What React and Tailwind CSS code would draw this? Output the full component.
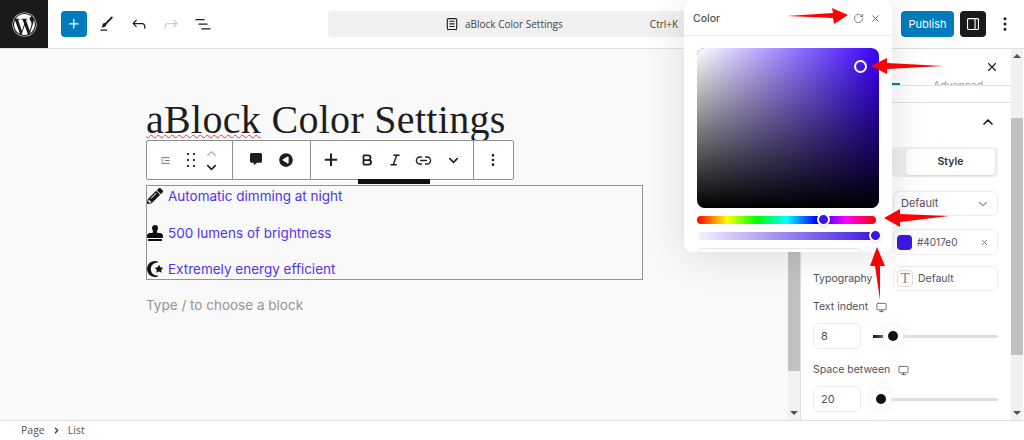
import {Bold, ChevronDown, ChevronRight, ChevronUp, Italic, Link2, MoreVertical, Monitor, RotateCw, X} from "lucide-react";
import {FaCommentAlt, FaPencilAlt, FaPlayCircle, FaStamp, FaStarAndCrescent, FaWordpress} from "react-icons/fa";

const items = [
    {icon: FaPencilAlt, text: "Automatic dimming at night"},
    {icon: FaStamp, text: "500 lumens of brightness"},
    {icon: FaStarAndCrescent, text: "Extremely energy efficient"},
];

function WpIcon({d, className = "text-[#1e1e1e]"}) {
    return (
        <svg viewBox="0 0 24 24" className={`w-5 h-5 fill-current ${className}`}>
            <path d={d}/>
        </svg>
    );
}

function Header() {
    return (
        <header className="h-[49px] shrink-0 flex items-center bg-white border-b border-[#e0e0e0]">
            <div className="w-12 h-12 bg-[#1a1a1a] flex items-center justify-center shrink-0">
                <FaWordpress className="text-white text-[25px]"/>
            </div>
            <div className="ml-[13px] w-[26px] h-[26px] bg-[#007cba] rounded-sm flex items-center justify-center">
                <svg viewBox="0 0 24 24" className="w-5 h-5 fill-white">
                    <path d="M11 12.5V17.5H12.5V12.5H17.5V11H12.5V6H11V11H6V12.5H11Z"/>
                </svg>
            </div>
            <div className="ml-[10px] flex gap-3">
                <WpIcon d="M4 20h8v-1.5H4V20zM18.9 3.5c-.6-.6-1.5-.6-2.1 0l-7.2 7.2c-.4-.1-.7 0-1.1.1-.5.2-1.5.7-1.9 2.2-.3 1-.6 1.9-.7 2.5l-.4.9.9-.2 2.5-.7c1.4-.4 2-1.4 2.2-1.9.1-.4.2-.7.1-1.1l7.2-7.2c.6-.6.6-1.5 0-2.1z"/>
                <WpIcon d="M18.3 11.7c-.6-.6-1.4-.9-2.3-.9H6.7l2.9-3.3-1.1-1-4.5 5L8.5 16l1-1-2.7-2.7H16c.5 0 .9.2 1.3.5 1 1 1 3.4 1 4.5v.3h1.5v-.2c0-1.5 0-4.3-1.5-5.7z"/>
                <WpIcon className="text-[#cccccc]" d="M15.6 6.5l-1.1 1 2.9 3.3H8c-.9 0-1.7.3-2.3.9-1.4 1.5-1.4 4.2-1.4 5.6v.2h1.5v-.3c0-1.1 0-3.5 1-4.5.3-.3.7-.5 1.3-.5h9.2L14.5 15l1.1 1.1 4.6-4.6-4.6-5z"/>
                <WpIcon d="M3 6h11v1.5H3V6zm3.5 5.5h11V13h-11v-1.5zM21 17H10v1.5h11V17z"/>
            </div>
            <div className="ml-[115px] w-[362px] h-[26px] rounded bg-[#f0f0f0] flex items-center font-['Open_Sans',sans-serif] text-[10px] text-[#444444]">
                <svg viewBox="0 0 24 24" className="ml-[115px] w-[18px] h-[18px] fill-[#1e1e1e]">
                    <path d="M15.5 7.5h-7V9h7V7.5Zm-7 3.5h7v1.5h-7V11Zm7 3.5h-7V16h7v-1.5Z"/>
                    <path fillRule="evenodd" d="M17 4H7a2 2 0 0 0-2 2v12a2 2 0 0 0 2 2h10a2 2 0 0 0 2-2V6a2 2 0 0 0-2-2ZM7 5.5h10a.5.5 0 0 1 .5.5v12a.5.5 0 0 1-.5.5H7a.5.5 0 0 1-.5-.5V6a.5.5 0 0 1 .5-.5Z"/>
                </svg>
                <span className="ml-[4px]">aBlock Color Settings</span>
                <span className="ml-[87px]">Ctrl+K</span>
            </div>
            <button className="ml-[211px] w-[53px] h-[26px] rounded-sm bg-[#007cba] text-white text-[11px] font-['Inter',sans-serif]">Publish</button>
            <div className="ml-[6px] w-[26px] h-[26px] rounded-sm bg-[#1a1a1a] flex items-center justify-center">
                <svg viewBox="0 0 24 24" className="w-[18px] h-[18px] fill-white">
                    <path d="M18 4H6c-1.1 0-2 .9-2 2v12c0 1.1.9 2 2 2h12c1.1 0 2-.9 2-2V6c0-1.1-.9-2-2-2zM5.5 18V6c0-.3.2-.5.5-.5h8v13H6c-.3 0-.5-.2-.5-.5zm13 0c0 .3-.2.5-.5.5h-2.500v-13H18c.3 0 .5.2.5.5v12z"/>
                </svg>
            </div>
            <MoreVertical className="ml-[10px] w-[18px] h-[18px] text-[#1e1e1e]" strokeWidth={2}/>
        </header>
    );
}

function BlockToolbar() {
    return (
        <div className="relative w-[368px] h-[40px] mt-[-1px] bg-white border border-[#8f8f8f] rounded-[2px] flex items-center text-[#1e1e1e]">
            <div className="w-[86px] h-full flex items-center border-r border-[#8f8f8f]">
                <svg viewBox="0 0 16 16" className="ml-[12px] w-[13px] h-[13px] stroke-[#555555]" fill="none">
                    <path d="M3 4.5h10M7.500 8H13M3 11.500h10M3 6.500 5 8l-2 1.500"/>
                </svg>
                <div className="ml-[15px] grid grid-cols-2 gap-x-[4px] gap-y-[4px]">
                    {[0, 1, 2, 3, 4, 5].map((n) => <span key={n} className="w-[2px] h-[2px] bg-[#333333]"/>)}
                </div>
                <div className="ml-[9px] flex flex-col items-center">
                    <ChevronUp className="w-[15px] h-[15px] text-[#aaaaaa] -mb-[1px]"/>
                    <ChevronDown className="w-[15px] h-[15px] text-[#1e1e1e]" strokeWidth={2.500}/>
                </div>
            </div>
            <div className="w-[78px] h-full flex items-center border-r border-[#8f8f8f]">
                <FaCommentAlt className="ml-[17px] text-[12px] -mt-[2px]"/>
                <FaPlayCircle className="ml-[17px] text-[14px] rotate-180"/>
            </div>
            <div className="w-[163px] h-full flex items-center border-r border-[#8f8f8f]">
                <svg viewBox="0 0 24 24" className="ml-[8px] w-[24px] h-[24px] fill-[#1e1e1e]">
                    <path d="M11 12.800V18h2v-5.200h5.200v-2H13V5.500h-2v5.300H5.800v2H11Z"/>
                </svg>
                <Bold className="ml-[17px] w-[14px] h-[14px]" strokeWidth={3}/>
                <Italic className="ml-[14px] w-[14px] h-[14px]" strokeWidth={2.500}/>
                <Link2 className="ml-[13px] w-[17px] h-[17px]" strokeWidth={2}/>
                <ChevronDown className="ml-[14px] w-[15px] h-[15px]" strokeWidth={2.500}/>
            </div>
            <MoreVertical className="ml-[11px] w-[16px] h-[16px]" strokeWidth={2}/>
            <div className="absolute left-[211px] -bottom-[5px] w-[72px] h-[5px] bg-[#111111]"/>
        </div>
    );
}

function Scrollbar({thumbTop, thumbHeight}) {
    return (
        <div className="w-3 shrink-0 bg-[#f1f1f1] flex flex-col items-center justify-between py-[5px] relative">
            <span className="w-0 h-0 border-x-[4px] border-x-transparent border-b-[4px] border-b-[#505050]"/>
            <span className="w-0 h-0 border-x-[4px] border-x-transparent border-t-[4px] border-t-[#505050]"/>
            <div className="absolute left-0 w-full bg-[#c1c1c1]" style={{top: thumbTop, height: thumbHeight}}/>
        </div>
    );
}

function Canvas() {
    return (
        <main className="w-[788px] shrink-0 bg-[#f9f9f9] pl-[146px] pt-[48px] flex flex-col font-['Inter',sans-serif]">
            <h1 className="font-['Liberation_Serif',serif] text-[40px] leading-[45px] tracking-[0.3px] text-[#1e1e1e] whitespace-nowrap h-[44px]">
                <span className="underline decoration-wavy decoration-[#e53e3e] decoration-1">aBlock</span> Color Settings
            </h1>
            <BlockToolbar/>
            <ul className="mt-[5px] w-[497px] h-[95px] border border-[#949494] bg-[#f9f9f9]">
                {items.map(({icon: Icon, text}) => (
                    <li key={text} className="h-[36.500px] flex items-start">
                        <Icon className="mt-[2px] w-[16px] h-[16px] text-[#111111]"/>
                        <span className="ml-[5px] text-[13.500px] leading-[20px] text-[#4f35ea]">{text}</span>
                    </li>
                ))}
            </ul>
            <p className="mt-[15px] text-[13.500px] leading-[20px] text-[#949494]">Type / to choose a block</p>
        </main>
    );
}

function Field({className = "", children}) {
    return (
        <div className={`border border-[#eeeeee] rounded-md bg-white flex items-center ${className}`}>{children}</div>
    );
}

function Slider({value, offset}) {
    return (
        <div className="relative flex-1 h-[3px] bg-[#dddddd] rounded-full ml-[12px]">
            <div className="absolute left-0 top-0 h-[3px] bg-[#111111]" style={{width: value}}/>
            <div className="absolute top-[-4px] w-[10px] h-[10px] rounded-full bg-[#111111] shadow-[0_0_0_5px_#ffffff,0_0_14px_6px_#eeeeee]" style={{left: offset}}/>
        </div>
    );
}

function Sidebar() {
    return (
        <aside className="w-[211px] shrink-0 bg-white border-l border-[#e0e0e0] font-['Inter',sans-serif] text-[10.500px] text-[#50505a] flex flex-col">
            <div className="h-[37px] shrink-0 flex border-b border-[#e0e0e0] overflow-hidden">
                <span className="self-end ml-[91px] w-[8px] h-[2px] bg-[#007cba] shrink-0"/>
                <span className="self-end ml-[33px] -mb-[8px] text-[#999999] text-[10.500px] leading-[14px] shrink-0">Advanced</span>
                <X className="self-center ml-auto mr-[12px] w-[14px] h-[14px] text-[#1e1e1e] shrink-0" strokeWidth={2}/>
            </div>
            <div className="h-[17px] shrink-0 border-b border-[#e0e0e0]"/>
            <div className="h-[37px] shrink-0 flex items-center justify-end pr-[15px]">
                <ChevronUp className="w-[16px] h-[16px] text-[#1e1e1e]" strokeWidth={2.500}/>
            </div>
            <div className="mt-[7px] ml-[91px] mr-[13px] h-[30px] shrink-0 rounded bg-[#f1f1f1] py-[2px] pr-[3px] flex justify-end">
                <div className="w-[89px] rounded bg-white shadow-sm flex items-center justify-center font-semibold text-[#333333]">Style</div>
            </div>
            <div className="pl-[12px] pr-[13px]">
                <div className="mt-[14px] flex justify-end">
                    <Field className="w-[105px] h-[25px] px-[7px] justify-between text-[11px]">
                        Default
                        <ChevronDown className="w-[14px] h-[14px] text-[#999999]"/>
                    </Field>
                </div>
                <div className="mt-[13px] flex justify-end">
                    <Field className="w-[105px] h-[26px] pl-[3px] pr-[8px] justify-between">
                        <span className="flex items-center">
                            <span className="w-[15px] h-[15px] rounded-sm bg-[#4017e0]"/>
                            <span className="ml-[5px] text-[10px]">#4017e0</span>
                        </span>
                        <X className="w-[9px] h-[9px] text-[#666666]"/>
                    </Field>
                </div>
                <div className="mt-[11px] flex items-center justify-between">
                    <span>Typography</span>
                    <Field className="w-[105px] h-[25px] pl-[3px]">
                        <span className="w-[16px] h-[17px] border border-[#dddddd] rounded-sm flex items-center justify-center font-['Liberation_Serif',serif] text-[15px] text-[#888888]">T</span>
                        <span className="ml-[5px]">Default</span>
                    </Field>
                </div>
                <div className="mt-[9px] h-[14px] flex items-center">
                    Text indent
                    <Monitor className="ml-[8px] w-[11px] h-[11px] text-[#666666]"/>
                </div>
                <div className="mt-[9px] flex items-center">
                    <Field className="w-[48px] h-[26px] pl-[7px] text-[11px]">8</Field>
                    <Slider value={12} offset={15}/>
                </div>
                <div className="mt-[14px] h-[14px] flex items-center">
                    Space between
                    <Monitor className="ml-[8px] w-[11px] h-[11px] text-[#666666]"/>
                </div>
                <div className="mt-[9px] flex items-center">
                    <Field className="w-[48px] h-[26px] pl-[7px] text-[11px]">20</Field>
                    <Slider value={0} offset={3}/>
                </div>
            </div>
        </aside>
    );
}

function ColorPopover() {
    return (
        <div className="absolute left-[684px] top-0 w-[208px] h-[252px] bg-white rounded-lg shadow-[0_4px_40px_rgba(0,0,0,0.12)] overflow-hidden font-['Inter',sans-serif]">
            <div className="h-[36px] pt-[2px] border-b border-[#e8e8e8] flex items-center pl-[9px] pr-[11px] text-[10.500px] text-[#555555] font-medium">
                <span className="flex-1">Color</span>
                <RotateCw className="w-[11px] h-[11px] text-[#777777]"/>
                <X className="ml-[6px] w-[11px] h-[11px] text-[#555555]"/>
            </div>
            <div className="px-[13px] pt-[12px]">
                <div className="relative w-[182px] h-[160px] rounded-lg bg-[#3a00ff]">
                    <div className="absolute inset-0 rounded-lg bg-[linear-gradient(to_right,#ffffff,rgba(255,255,255,0))]"/>
                    <div className="absolute inset-0 rounded-lg bg-[linear-gradient(to_bottom,rgba(0,0,0,0),#000000)]"/>
                    <div className="absolute left-[157px] top-[12px] w-[13px] h-[13px] rounded-full border-2 border-white"/>
                </div>
                <div className="relative mt-[8px] w-[179px] h-[8px] rounded-full bg-[linear-gradient(to_right,#ff0000,#ffff00,#00ff00,#00ffff,#0000ff,#ff00ff,#ff0000)]">
                    <div className="absolute left-[120px] top-[-3px] w-[13px] h-[13px] rounded-full bg-[#3a14e0] border-2 border-white shadow"/>
                </div>
                <div className="relative mt-[8px] w-[179px] h-[8px] rounded-full bg-[linear-gradient(to_right,rgba(64,23,224,0.05),#4017e0)]">
                    <div className="absolute left-[172px] top-[-3px] w-[13px] h-[13px] rounded-full bg-[#3a14e0] border-2 border-white shadow"/>
                </div>
                <div className="mt-[8px] w-[166px] h-[20px] rounded-md border border-[#e5e5e5]"/>
            </div>
        </div>
    );
}

function RedArrows() {
    return (
        <svg viewBox="0 0 1024 440" className="absolute inset-0 w-[1024px] h-[440px] pointer-events-none fill-[#ff0000]">
            <polygon points="787,16 833,13 832,8 848,15 834,24 833,18"/>
            <polygon points="943,66 887,69 887,74 871,66 887,58 887,63"/>
            <polygon points="949,216 900,222 900,227 884,218 900,209 900,214"/>
            <polygon points="880,300 875,266 870,266 877,247 885,266 880,266"/>
        </svg>
    );
}

export default function App() {
    return (
        <div className="relative w-[1024px] h-[440px] overflow-hidden bg-white flex flex-col">
            <Header/>
            <div className="flex-1 min-h-0 flex">
                <Canvas/>
                <Scrollbar thumbTop={69} thumbHeight={253}/>
                <Sidebar/>
                <Scrollbar thumbTop={69} thumbHeight={237}/>
            </div>
            <footer className="h-[20px] shrink-0 bg-white border-t border-[#e0e0e0] pl-[21px] flex items-center font-['Open_Sans',sans-serif] text-[10.500px] text-[#555555]">
                Page
                <ChevronRight className="mx-[7px] w-[9px] h-[9px] text-[#333333]" strokeWidth={3.500}/>
                List
            </footer>
            <ColorPopover/>
            <RedArrows/>
        </div>
    );
}
